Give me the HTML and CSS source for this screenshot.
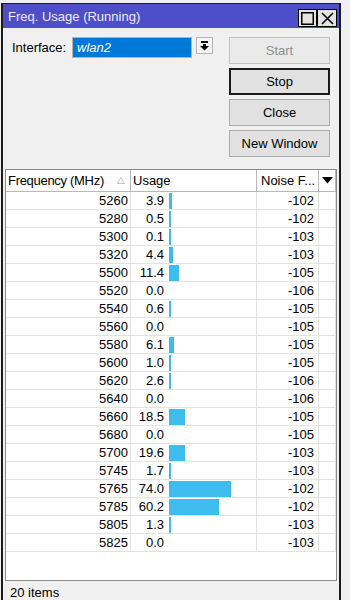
FILE: index.html
```html
<!DOCTYPE html>
<html lang="en">
<head>
    <meta charset="UTF-8">
    <meta name="viewport" content="width=device-width, initial-scale=1.0">
    <title>Freq. Usage</title>
    <link rel="stylesheet" href="styles.css">
</head>
<body>
    <div class="desktop">
        <div class="window">
            <div class="titlebar">
                <span class="title">Freq. Usage (Running)</span>
                <div class="title-btns">
                    <span class="tbtn">
                        <svg width="13" height="13" viewBox="0 0 13 13"><rect x="0.75" y="0.75" width="11.5" height="11.5" fill="none" stroke="#000" stroke-width="1.5"/></svg>
                    </span>
                    <span class="tbtn">
                        <svg width="13" height="13" viewBox="0 0 13 13"><path d="M1 1 L12 12 M12 1 L1 12" stroke="#000" stroke-width="1.6"/></svg>
                    </span>
                </div>
            </div>

            <div class="top">
                <div class="iface">
                    <label class="iface-label">Interface:</label>
                    <div class="iface-input">wlan2</div>
                    <span class="drop-btn">
                        <svg width="9" height="10" viewBox="0 0 9 10"><rect x="1" y="0" width="7" height="2" fill="#000"/><rect x="3" y="3" width="3" height="2" fill="#000"/><polygon points="0,5 9,5 4.5,9.5" fill="#000"/></svg>
                    </span>
                </div>
                <div class="actions">
                    <button class="btn" disabled>Start</button>
                    <button class="btn default">Stop</button>
                    <button class="btn">Close</button>
                    <button class="btn">New Window</button>
                </div>
            </div>

            <div class="table">
                <div class="row head">
                    <div class="cell hfreq">
                        <span class="hfreq-text">Frequency (MHz)</span>
                        <svg class="sort" width="8" height="7" viewBox="0 0 8 7"><polygon points="4,0.5 7.5,6.5 0.5,6.5" fill="none" stroke="#c4c4c4" stroke-width="1"/></svg>
                    </div>
                    <div class="cell husage">Usage</div>
                    <div class="cell hnoise">Noise F...</div>
                    <div class="cell hmenu">
                        <svg width="11" height="7" viewBox="0 0 11 7"><polygon points="0,0 11,0 5.5,6.5" fill="#000"/></svg>
                    </div>
                </div>

                <div class="row"><div class="cell freq">5260</div><div class="cell usage"><span class="val">3.9</span><span class="bar" style="width:3px"></span></div><div class="cell noise">-102</div><div class="cell"></div></div>
                <div class="row"><div class="cell freq">5280</div><div class="cell usage"><span class="val">0.5</span><span class="bar" style="width:2px"></span></div><div class="cell noise">-102</div><div class="cell"></div></div>
                <div class="row"><div class="cell freq">5300</div><div class="cell usage"><span class="val">0.1</span><span class="bar" style="width:2px"></span></div><div class="cell noise">-103</div><div class="cell"></div></div>
                <div class="row"><div class="cell freq">5320</div><div class="cell usage"><span class="val">4.4</span><span class="bar" style="width:4px"></span></div><div class="cell noise">-103</div><div class="cell"></div></div>
                <div class="row"><div class="cell freq">5500</div><div class="cell usage"><span class="val">11.4</span><span class="bar" style="width:10px"></span></div><div class="cell noise">-105</div><div class="cell"></div></div>
                <div class="row"><div class="cell freq">5520</div><div class="cell usage"><span class="val">0.0</span></div><div class="cell noise">-106</div><div class="cell"></div></div>
                <div class="row"><div class="cell freq">5540</div><div class="cell usage"><span class="val">0.6</span><span class="bar" style="width:2px"></span></div><div class="cell noise">-105</div><div class="cell"></div></div>
                <div class="row"><div class="cell freq">5560</div><div class="cell usage"><span class="val">0.0</span></div><div class="cell noise">-105</div><div class="cell"></div></div>
                <div class="row"><div class="cell freq">5580</div><div class="cell usage"><span class="val">6.1</span><span class="bar" style="width:5px"></span></div><div class="cell noise">-105</div><div class="cell"></div></div>
                <div class="row"><div class="cell freq">5600</div><div class="cell usage"><span class="val">1.0</span><span class="bar" style="width:2px"></span></div><div class="cell noise">-105</div><div class="cell"></div></div>
                <div class="row"><div class="cell freq">5620</div><div class="cell usage"><span class="val">2.6</span><span class="bar" style="width:2px"></span></div><div class="cell noise">-106</div><div class="cell"></div></div>
                <div class="row"><div class="cell freq">5640</div><div class="cell usage"><span class="val">0.0</span></div><div class="cell noise">-106</div><div class="cell"></div></div>
                <div class="row"><div class="cell freq">5660</div><div class="cell usage"><span class="val">18.5</span><span class="bar" style="width:16px"></span></div><div class="cell noise">-105</div><div class="cell"></div></div>
                <div class="row"><div class="cell freq">5680</div><div class="cell usage"><span class="val">0.0</span></div><div class="cell noise">-105</div><div class="cell"></div></div>
                <div class="row"><div class="cell freq">5700</div><div class="cell usage"><span class="val">19.6</span><span class="bar" style="width:16px"></span></div><div class="cell noise">-103</div><div class="cell"></div></div>
                <div class="row"><div class="cell freq">5745</div><div class="cell usage"><span class="val">1.7</span><span class="bar" style="width:2px"></span></div><div class="cell noise">-103</div><div class="cell"></div></div>
                <div class="row"><div class="cell freq">5765</div><div class="cell usage"><span class="val">74.0</span><span class="bar" style="width:62px"></span></div><div class="cell noise">-102</div><div class="cell"></div></div>
                <div class="row"><div class="cell freq">5785</div><div class="cell usage"><span class="val">60.2</span><span class="bar" style="width:50px"></span></div><div class="cell noise">-102</div><div class="cell"></div></div>
                <div class="row"><div class="cell freq">5805</div><div class="cell usage"><span class="val">1.3</span><span class="bar" style="width:2px"></span></div><div class="cell noise">-103</div><div class="cell"></div></div>
                <div class="row"><div class="cell freq">5825</div><div class="cell usage"><span class="val">0.0</span></div><div class="cell noise">-103</div><div class="cell"></div></div>
            </div>

            <div class="status">20 items</div>
        </div>
    </div>
</body>
</html>
```

FILE: styles.css
```css
body {
    margin: 0;
    height: 600px;
    overflow: hidden;
    background: #f0f0f0;
    font-family: "Liberation Sans", Arial, sans-serif;
    font-size: 13px;
    color: #000;
}

.desktop {
    height: 600px;
    padding: 3px 9px 0 1px;
    box-sizing: border-box;
}

.window {
    height: 600px;
    border: 2px solid #1c1c1c;
    border-top-width: 1px;
    border-bottom: none;
    background: #f0f0f0;
    display: flex;
    flex-direction: column;
}

.titlebar {
    height: 24px;
    background: #4e4ec8;
    display: flex;
    align-items: center;
    padding-left: 5px;
}

.title {
    color: #ececff;
    font-size: 13px;
}

.title-btns {
    margin-left: auto;
    margin-right: 2px;
    align-self: flex-end;
    margin-bottom: 1px;
    display: flex;
}

.tbtn {
    width: 17px;
    height: 16px;
    border: 1px solid #000;
    background: #e4e4e4;
    display: flex;
    align-items: center;
    justify-content: center;
}

.tbtn + .tbtn {
    width: 18px;
}

.top {
    display: flex;
    justify-content: space-between;
    padding: 9px 9px 0 9px;
}

.iface {
    display: flex;
    align-items: flex-start;
}

.iface-label {
    margin-top: 3px;
    width: 60px;
}

.iface-input {
    width: 114px;
    height: 19px;
    line-height: 19px;
    border: 1px solid #b4b4b4;
    background: #0078d7;
    color: #fff;
    font-style: italic;
    padding-left: 4px;
}

.drop-btn {
    width: 15px;
    height: 15px;
    margin-left: 4px;
    border: 1px solid #b4b4b4;
    background: #f4f4f4;
    display: flex;
    align-items: center;
    justify-content: center;
}

.actions {
    display: flex;
    flex-direction: column;
    gap: 4px;
    width: 101px;
}

.btn {
    height: 27px;
    font-family: inherit;
    font-size: 13px;
    background: #e1e1e1;
    border: 1px solid #adadad;
    color: #000;
    padding: 0;
}

.btn:disabled {
    background: #eaeaea;
    border-color: #c2c2c2;
    color: #8d8d8d;
}

.btn.default {
    border: 2px solid #1a1a1a;
}

.table {
    margin: 12px 2px 0 2px;
    height: 412px;
    box-sizing: border-box;
    border: 1px solid #8c8c8c;
    background: #fff;
}

.row {
    display: grid;
    grid-template-columns: 125px 126px 62px 1fr;
    height: 18px;
}

.cell {
    border-right: 1px solid #e2e2e2;
    border-bottom: 1px solid #e2e2e2;
    line-height: 17px;
    white-space: nowrap;
    overflow: hidden;
}

.row.head {
    height: 22px;
}

.head .cell {
    border-right-color: #b9b9b9;
    border-bottom-color: #b9b9b9;
    line-height: 21px;
}

.hfreq {
    padding: 0 5px 0 2px;
    display: flex;
    align-items: center;
}

.hfreq-text {
    flex: none;
    letter-spacing: -0.3px;
}

.sort {
    flex: none;
    margin-left: auto;
}

.husage {
    padding-left: 2px;
}

.hnoise {
    padding-left: 4px;
}

.hmenu {
    display: flex;
    align-items: center;
    justify-content: center;
}

.freq {
    text-align: right;
    padding-right: 2px;
}

.usage {
    display: flex;
    align-items: center;
}

.val {
    width: 33px;
    text-align: right;
    flex: none;
}

.bar {
    height: 16px;
    margin-left: 5px;
    background: #3fbcee;
}

.noise {
    text-align: right;
    padding-right: 4px;
}

.status {
    padding: 4px 0 0 7px;
}
```
